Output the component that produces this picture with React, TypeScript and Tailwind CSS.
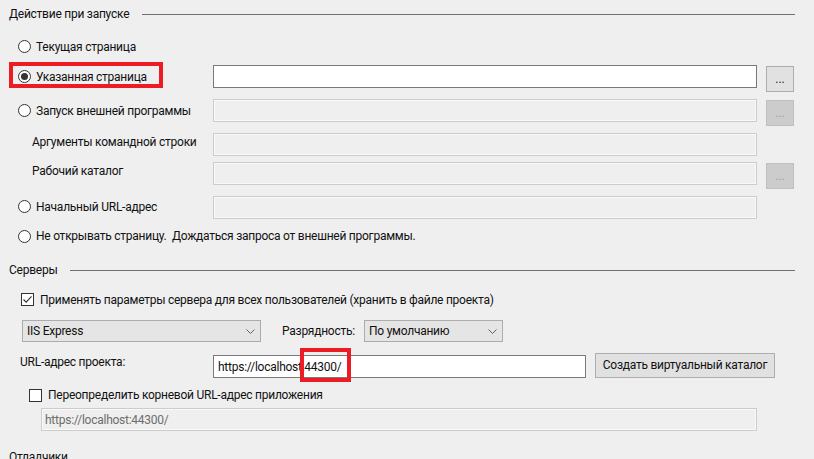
import React from "react";

const font = { fontFamily: 'Roboto, "Noto Sans", "Liberation Sans", sans-serif' };

function Radio({ checked = false, label }: { checked?: boolean; label: string }) {
  return (
    <div className="flex items-center pl-[18px]">
      <span className="flex h-[13px] w-[13px] items-center justify-center rounded-full border border-[#333333] bg-white">
        {checked && <span className="h-[7px] w-[7px] rounded-full bg-[#333333]" />}
      </span>
      <span className="ml-[5px] whitespace-pre">{label}</span>
    </div>
  );
}

function Check({ checked = false, label, className = "" }: { checked?: boolean; label: string; className?: string }) {
  return (
    <div className={"flex items-center " + className}>
      <span className="flex h-[13px] w-[13px] items-center justify-center border border-[#333333] bg-white">
        {checked && (
          <svg width="11" height="11" viewBox="0 0 11 11" fill="none">
            <path d="M1.5 5.5 L4.2 8.2 L9.5 2.3" stroke="#333333" strokeWidth="1.1" />
          </svg>
        )}
      </span>
      <span className="ml-[6px]">{label}</span>
    </div>
  );
}

function TextBox({ disabled = false, value = "", className = "" }: { disabled?: boolean; value?: string; className?: string }) {
  return (
    <div
      className={
        "flex h-[23px] items-center px-[3px] " +
        (disabled
          ? "border border-[#cccccc] bg-[#efefef] text-[#6d6d6d] shadow-[inset_0_0_0_1px_#f9f9f9] "
          : "border border-[#7a7a7a] bg-white ") +
        className
      }
    >
      {value}
    </div>
  );
}

function Dots({ disabled = false, className = "" }: { disabled?: boolean; className?: string }) {
  return (
    <div
      className={
        "flex h-[26px] w-[28px] items-end justify-center pb-[6px] border leading-none tracking-normal " +
        (disabled ? "border-[#bfbfbf] bg-[#cccccc] text-[#a3a3a3] " : "border-[#adadad] bg-[#e1e1e1] text-[#222222] ") +
        className
      }
    >
      ...
    </div>
  );
}

function Select({ value, className = "" }: { value: string; className?: string }) {
  return (
    <div className={"flex h-[22px] items-center justify-between border border-[#acacac] bg-[#e5e5e5] pl-[4px] pr-[5px] " + className}>
      <span>{value}</span>
      <svg width="9" height="5" viewBox="0 0 9 5" fill="none">
        <path d="M0.5 0.5 L4.5 4.5 L8.5 0.5" stroke="#606060" strokeWidth="1" />
      </svg>
    </div>
  );
}

function Header({ title, className = "" }: { title: string; className?: string }) {
  return (
    <div className={"flex items-center pl-[9px] pr-[19px] " + className}>
      <span>{title}</span>
      <div className="ml-[13px] h-px flex-1 bg-[#707070]" />
    </div>
  );
}

export default function App() {
  return (
    <div
      className="relative h-[459px] w-[814px] overflow-hidden bg-[#efefef] text-[12px] leading-[16px] tracking-[-0.25px] text-[#111111]"
      style={font}
    >
      <div className="flex flex-col">
        <Header title="Действие при запуске" className="h-[28px]" />

        <div className="flex h-[37px] items-center">
          <Radio label="Текущая страница" />
        </div>

        <div className="flex h-[34px] items-start">
          <div className="flex h-[23px] w-[213px] items-center">
            <Radio checked label="Указанная страница" />
          </div>
          <TextBox className="w-[544px]" />
          <Dots className="ml-[9px] mt-[1px]" />
        </div>

        <div className="flex h-[34px] items-start">
          <div className="flex h-[23px] w-[213px] items-center">
            <Radio label="Запуск внешней программы" />
          </div>
          <TextBox disabled className="w-[544px]" />
          <Dots disabled className="ml-[9px] mt-[1px]" />
        </div>

        <div className="flex h-[29px] items-start">
          <div className="flex h-[18px] w-[213px] items-center pl-[32px]">Аргументы командной строки</div>
          <TextBox disabled className="w-[544px]" />
        </div>

        <div className="flex h-[34px] items-start">
          <div className="flex h-[18px] w-[213px] items-center pl-[32px]">Рабочий каталог</div>
          <TextBox disabled className="w-[544px]" />
          <Dots disabled className="ml-[9px] mt-[1px]" />
        </div>

        <div className="flex h-[30px] items-start">
          <div className="flex h-[21px] w-[213px] items-center">
            <Radio label="Начальный URL-адрес" />
          </div>
          <TextBox disabled className="w-[544px]" />
        </div>

        <div className="flex h-[20px] items-center">
          <Radio label="Не открывать страницу.  Дождаться запроса от внешней программы." />
        </div>

        <Header title="Серверы" className="mt-[10px] h-[28px]" />

        <Check checked className="mt-[4px] h-[23px] pl-[21px]" label="Применять параметры сервера для всех пользователей (хранить в файле проекта)" />

        <div className="mt-[9px] flex items-center">
          <Select value="IIS Express" className="ml-[22px] w-[239px]" />
          <span className="ml-[21px] w-[82px]">Разрядность:</span>
          <Select value="По умолчанию" className="w-[139px]" />
        </div>

        <div className="mt-[13px] flex items-center">
          <span className="box-content w-[193px] pl-[20px] -mt-[10px]">URL-адрес проекта:</span>
          <TextBox value="https://localhost:44300/" className="w-[373px] border-[#1a1a1a] !px-[4px]" />
          <button className="ml-[9px] h-[25px] w-[180px] -mt-[3px] border border-[#adadad] bg-[#e1e1e1] text-[#111111]">
            Создать виртуальный каталог
          </button>
        </div>

        <Check className="mt-[5px] h-[24px] pl-[29px]" label="Переопределить корневой URL-адрес приложения" />

        <div className="mt-[1px] pl-[41px]">
          <TextBox disabled value="https://localhost:44300/" className="w-[716px]" />
        </div>

        <div className="mt-[18px] pl-[9px]">Отладчики</div>
      </div>

      {/* red highlight boxes */}
      <div className="absolute left-[9px] top-[62px] h-[26px] w-[154px] border-[4px] border-[#ed1c24]" />
      <div className="absolute left-[300px] top-[348px] h-[34px] w-[51px] border-[4px] border-[#ed1c24]" />
    </div>
  );
}
